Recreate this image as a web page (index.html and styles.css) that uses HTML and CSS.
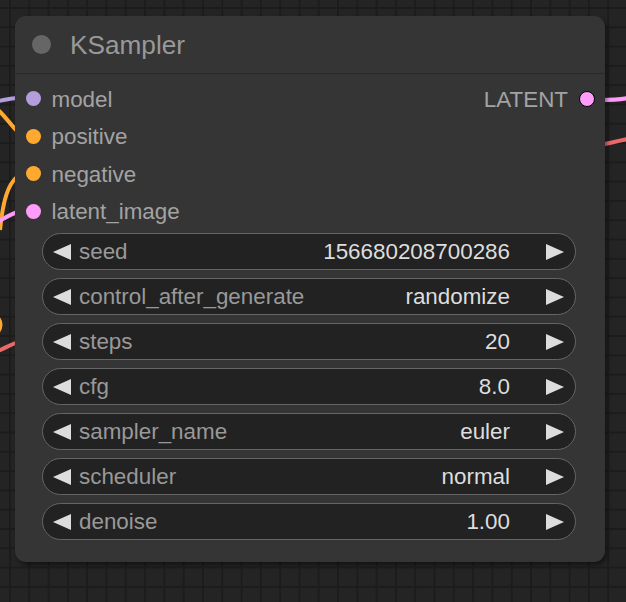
FILE: index.html
```html
<!DOCTYPE html>
<html>
<head>
<meta charset="utf-8">
<link rel="stylesheet" href="styles.css">
</head>
<body>
<div class="canvas">
  <svg class="wires" width="626" height="602" viewBox="0 0 626 602">
    <path d="M-2 101 C5 100 10 98 18 98" stroke="#b39ddb" stroke-width="4" fill="none"/>
    <path d="M-2 110 C5 116 10 124 18 132" stroke="#ffa931" stroke-width="4" fill="none"/>
    <path d="M18 176 C8 184 3 200 0 230" stroke="#ffa931" stroke-width="4" fill="none"/>
    <path d="M-2 222 C5 218 10 214 18 212" stroke="#ff9cf9" stroke-width="4" fill="none"/>
    <path d="M-2 318 C1 322 2 326 -2 332" stroke="#ffa931" stroke-width="4" fill="none"/>
    <path d="M-2 351 C5 348 10 345 18 342" stroke="#e86a6a" stroke-width="4" fill="none"/>
    <path d="M600 100 C610 100 618 100 628 98" stroke="#ff9cf9" stroke-width="4" fill="none"/>
    <path d="M600 145 C610 143 618 141 628 139" stroke="#e86a6a" stroke-width="4" fill="none"/>
  </svg>
  <div class="node">
    <div class="title">
      <span class="title-dot"></span>
      <span class="title-text">KSampler</span>
    </div>
    <div class="slots">
      <div class="inputs">
        <div class="slot"><span class="dot c-model"></span><span class="slot-label">model</span></div>
        <div class="slot"><span class="dot c-cond"></span><span class="slot-label">positive</span></div>
        <div class="slot"><span class="dot c-cond"></span><span class="slot-label">negative</span></div>
        <div class="slot"><span class="dot c-latent"></span><span class="slot-label">latent_image</span></div>
      </div>
      <div class="outputs">
        <div class="slot out"><span class="slot-label">LATENT</span><span class="dot c-latent outdot"></span></div>
      </div>
    </div>
    <div class="widgets">
      <div class="widget"><span class="arrow left"></span><span class="w-label">seed</span><span class="w-value">156680208700286</span><span class="arrow right"></span></div>
      <div class="widget"><span class="arrow left"></span><span class="w-label">control_after_generate</span><span class="w-value">randomize</span><span class="arrow right"></span></div>
      <div class="widget"><span class="arrow left"></span><span class="w-label">steps</span><span class="w-value">20</span><span class="arrow right"></span></div>
      <div class="widget"><span class="arrow left"></span><span class="w-label">cfg</span><span class="w-value">8.0</span><span class="arrow right"></span></div>
      <div class="widget"><span class="arrow left"></span><span class="w-label">sampler_name</span><span class="w-value">euler</span><span class="arrow right"></span></div>
      <div class="widget"><span class="arrow left"></span><span class="w-label">scheduler</span><span class="w-value">normal</span><span class="arrow right"></span></div>
      <div class="widget"><span class="arrow left"></span><span class="w-label">denoise</span><span class="w-value">1.00</span><span class="arrow right"></span></div>
    </div>
  </div>
</div>
</body>
</html>
```

FILE: styles.css
```css
html, body {
  margin: 0;
  padding: 0;
  background: #232323;
}
.canvas {
  position: relative;
  width: 626px;
  height: 602px;
  overflow: hidden;
  background-color: #242424;
  background-image:
    linear-gradient(to right, #1c1c1c 1.5px, transparent 1.5px),
    linear-gradient(to bottom, #1c1c1c 1.5px, transparent 1.5px);
  background-size: 19.3px 19.3px;
  background-position: 9px 7px;
  padding: 16px 0 0 15px;
  box-sizing: border-box;
  font-family: "Liberation Sans", Arial, sans-serif;
}
.wires {
  position: absolute;
  left: 0;
  top: 0;
}
.node {
  position: relative;
  width: 590px;
  height: 546px;
  background: #353535;
  border-radius: 11px;
  box-shadow: 2px 3px 4px rgba(0, 0, 0, 0.45);
  box-sizing: border-box;
  display: flex;
  flex-direction: column;
}
.title {
  height: 57px;
  border-bottom: 1px solid #2a2a2a;
  display: flex;
  align-items: center;
  padding-left: 17px;
  box-sizing: content-box;
}
.title-dot {
  width: 19px;
  height: 19px;
  border-radius: 50%;
  background: #666;
  margin-right: 19px;
  flex: none;
}
.title-text {
  font-size: 26.2px;
  color: #999;
  position: relative;
  top: 1px;
}
.slots {
  display: flex;
  justify-content: space-between;
  padding-top: 6px;
  height: 150px;
}
.slot {
  height: 37.5px;
  display: flex;
  align-items: center;
}
.inputs .slot {
  padding-left: 10.5px;
}
.dot {
  width: 15px;
  height: 15px;
  border-radius: 50%;
  flex: none;
}
.inputs .dot {
  margin-right: 11px;
}
.c-model { background: #b39ddb; }
.c-cond { background: #ffa931; }
.c-latent { background: #ff9cf9; }
.outdot {
  width: 14px;
  height: 14px;
  border: 1.5px solid #000;
  margin-left: 11px;
  margin-right: 10px;
}
.slot-label {
  font-size: 22.4px;
  color: #a3a3a3;
  position: relative;
  top: 1px;
}
.widgets {
  display: flex;
  flex-direction: column;
  gap: 8px;
  padding: 3px 29px 0 27px;
}
.widget {
  height: 37px;
  box-sizing: border-box;
  border: 1.5px solid #656565;
  border-radius: 19px;
  background: #222;
  display: flex;
  align-items: center;
  padding: 0 11px 0 10px;
}
.arrow {
  width: 0;
  height: 0;
  border-top: 8.5px solid transparent;
  border-bottom: 8.5px solid transparent;
  flex: none;
}
.arrow.left {
  border-right: 18px solid #ddd;
  margin-right: 8px;
}
.arrow.right {
  border-left: 18px solid #ddd;
  margin-left: 36px;
}
.w-label {
  font-size: 22.4px;
  color: #999;
  flex: 1;
}
.w-value {
  font-size: 22.4px;
  color: #ddd;
}
```
